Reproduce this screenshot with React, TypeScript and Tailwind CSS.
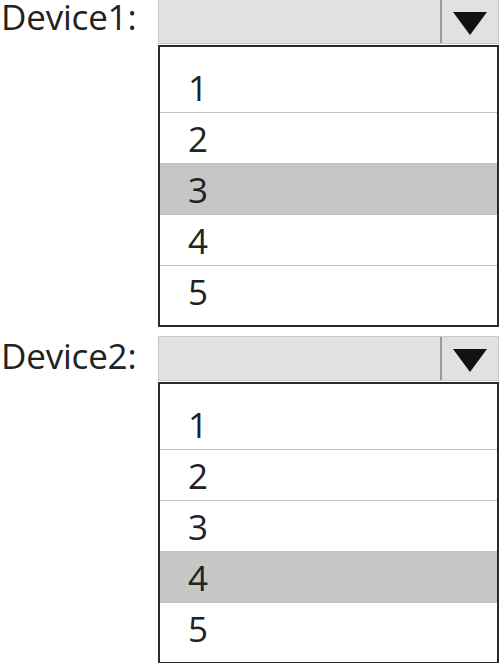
const OPTIONS = ["1", "2", "3", "4", "5"];

function Arrow() {
  return (
    <svg width="34" height="24" viewBox="0 0 34 24" className="block">
      <polygon points="0,1 34,1 17,24" fill="#111" />
    </svg>
  );
}

function DeviceSelect({ label, selected, top, labelPad }: { label: string; selected: string; top: string; labelPad: string }) {
  return (
    <div className={`flex ${top}`}>
      <div className={`w-[158px] shrink-0 text-[35px] leading-[34px] text-[#222] pl-[1px] tracking-[-0.2px] ${labelPad}`}>
        {label}
      </div>
      <div className="w-[341px] flex flex-col">
        <div className="h-[45px] flex bg-[#e1e1e1] border border-[#c9c9c9]">
          <div className="flex-1" />
          <div className="w-[58px] border-l-2 border-[#9a9a9a] flex items-center justify-center pt-[2px]">
            <Arrow />
          </div>
        </div>
        <div className="mt-[1px] border-2 border-[#2a2a2a] bg-white pt-[15px] pb-[8px]">
          {OPTIONS.map((o, i) => (
            <div
              key={o}
              className={`h-[51px] flex items-center pl-[28px] text-[35px] leading-none text-[#222] ${
                i < OPTIONS.length - 1 ? "border-b border-[#c4c4c4]" : ""
              } ${o === selected ? "bg-[#c6c6c6]" : ""}`}
            >
              {o}
            </div>
          ))}
        </div>
      </div>
    </div>
  );
}

export default function App() {
  return (
    <div className="w-[501px] h-[663px] bg-white overflow-hidden font-['Open_Sans',sans-serif]">
      <DeviceSelect label="Device1:" selected="3" top="mt-[-1px]" labelPad="pt-[1px]" />
      <DeviceSelect label="Device2:" selected="4" top="mt-[9px]" labelPad="pt-[3px]" />
    </div>
  );
}
